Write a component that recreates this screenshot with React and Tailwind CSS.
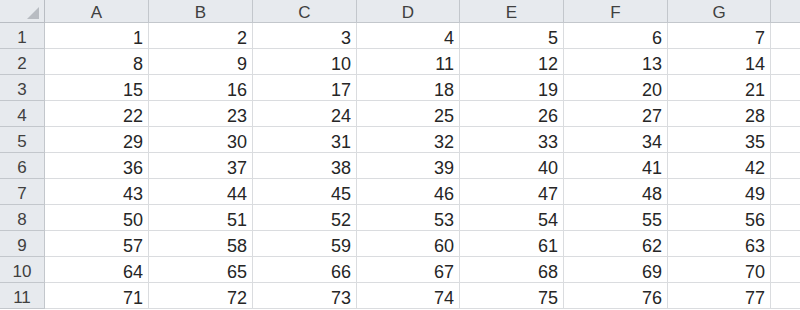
import React from "react";

const cols = ["A", "B", "C", "D", "E", "F", "G"];
const rows = Array.from({ length: 11 }, (_, i) => i + 1);

export default function App() {
  return (
    <div
      className="w-[800px] h-[310px] overflow-hidden bg-white text-[#262626]"
      style={{ fontFamily: '"Liberation Sans", Arial, sans-serif' }}
    >
      <div className="grid grid-cols-[45px_104px_104px_104px_103px_104px_104px_103px_1fr] grid-rows-[23px_repeat(11,26px)]">
        <div className="relative bg-[#e7eaee] border-r border-b border-[#b9bdc3]">
          <svg className="absolute left-[27px] top-[7px]" width="12" height="12" viewBox="0 0 12 12">
            <polygon points="12,0 12,12 0,12" fill="#b8bcc2" />
          </svg>
        </div>
        {cols.map((c) => (
          <div
            key={c}
            className="flex items-center justify-center bg-[#e7eaee] border-r border-b border-[#c3c7cc] text-[17px] leading-none text-[#404040] pt-[3px]"
          >
            {c}
          </div>
        ))}
        <div className="bg-[#e7eaee] border-b border-[#c3c7cc]" />
        {rows.map((r) => (
          <React.Fragment key={r}>
            <div className="flex items-center justify-center bg-[#e7eaee] border-r border-b border-[#c3c7cc] text-[17px] leading-none text-[#404040] pt-[3px]">
              {r}
            </div>
            {cols.map((c, ci) => (
              <div
                key={c}
                className="flex items-center justify-end pr-[5px] border-r border-b border-[#dadcdf] text-[18px] leading-none pt-[4px]"
              >
                {(r - 1) * 7 + ci + 1}
              </div>
            ))}
            <div className="border-b border-[#dadcdf]" />
          </React.Fragment>
        ))}
      </div>
    </div>
  );
}
